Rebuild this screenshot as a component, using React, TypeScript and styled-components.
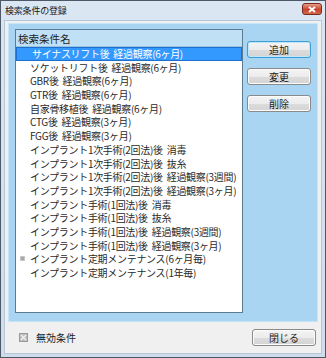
import React from 'react';
import styled, { createGlobalStyle } from 'styled-components';

const GlobalStyle = createGlobalStyle`
  html, body {
    margin: 0;
    padding: 0;
    background: #ffffff;
  }
  body {
    font-family: "Noto Sans CJK JP", "DejaVu Sans", sans-serif;
    font-size: 10px;
    color: #1e1e1e;
  }
`;

const Window = styled.div`
  width: 326px;
  height: 358px;
  box-sizing: border-box;
  border: 1px solid #4d5966;
  background: linear-gradient(#dbe6f3, #cfdcec);
  display: flex;
  flex-direction: column;
  padding: 0 3px 3px 3px;
`;

const TitleBar = styled.div`
  height: 19px;
  display: flex;
  align-items: center;
  justify-content: space-between;
  padding-left: 1px;
  font-size: 9px;
  letter-spacing: -0.2px;
  color: #1a1a1a;
`;

const CloseBox = styled.div`
  width: 20px;
  height: 12px;
  margin-top: -3px;
  border: 1px solid #7a2a1e;
  border-radius: 3px;
  background: linear-gradient(#e99b86, #c7462b 55%, #d2664a);
  display: flex;
  align-items: center;
  justify-content: center;
  box-sizing: border-box;
`;

const Client = styled.div`
  flex: 1;
  background: #f0f0f0;
  border: 1px solid #b7c6d8;
  display: flex;
  flex-direction: column;
  padding: 2px 3px 0 3px;
`;

const Panel = styled.div`
  height: 299px;
  box-sizing: border-box;
  background: #aad5f2;
  border: 1px solid #c7e4f8;
  padding: 5px 5px 8px 6px;
  display: flex;
  gap: 4px;
`;

const ListBox = styled.div`
  width: 228px;
  box-sizing: border-box;
  border: 1px solid #5d7b93;
  background: #ffffff;
  display: flex;
  flex-direction: column;
`;

const ListHeader = styled.div`
  height: 17px;
  box-sizing: border-box;
  background: #c0e0f6;
  border-bottom: 1px solid #98c4e2;
  padding-left: 2px;
  display: flex;
  align-items: center;
  font-size: 10.5px;
  color: #222;
`;

const Row = styled.div<{ $selected?: boolean }>`
  height: 13.7px;
  line-height: 13.7px;
  padding-left: ${p => (p.$selected ? '16px' : '14px')};
  padding-right: 1px;
  position: relative;
  white-space: nowrap;
  overflow: hidden;
  text-overflow: ellipsis;
  font-size: 10px;
  letter-spacing: -0.3px;
  word-spacing: 2px;
  background: ${p => (p.$selected ? '#3399ff' : 'transparent')};
  color: ${p => (p.$selected ? '#ffffff' : '#2a2a2a')};
  outline: ${p => (p.$selected ? '1px solid #1f6fcf' : 'none')};
  outline-offset: -1px;
`;

const Bullet = styled.span`
  position: absolute;
  left: 4px;
  top: 4px;
  width: 5px;
  height: 5px;
  background: #a8a8a8;
  border: 1px solid #c8c8c8;
  box-sizing: border-box;
`;

const ButtonColumn = styled.div`
  display: flex;
  flex-direction: column;
  gap: 10px;
  padding-top: 12px;
`;

const Button = styled.button<{ $focused?: boolean }>`
  width: 64px;
  height: 17px;
  padding: 0;
  box-sizing: border-box;
  border: 1px solid ${p => (p.$focused ? '#3c9fd6' : '#8a8a8a')};
  border-radius: 3px;
  background: linear-gradient(#f4f4f4 0%, #ececec 50%, #dcdcdc 51%, #d4d4d4 100%);
  box-shadow: inset 0 0 0 1px ${p => (p.$focused ? '#bfe6fa' : '#fcfcfc')};
  font-family: "Noto Sans CJK JP", sans-serif;
  font-size: 10px;
  color: #1e1e1e;
  line-height: 1;
`;

const Footer = styled.div`
  flex: 1;
  display: flex;
  align-items: center;
  justify-content: space-between;
  padding: 0 2px 0 11px;
`;

const Legend = styled.div`
  display: flex;
  align-items: center;
  gap: 8px;
  font-size: 10px;
  color: #222;
`;

const LegendBox = styled.span`
  width: 9px;
  height: 9px;
  box-sizing: border-box;
  border: 1px solid #9a9a9a;
  background: #bdbdbd;
  display: flex;
  align-items: center;
  justify-content: center;
`;

const items = [
  'サイナスリフト後 経過観察(6ヶ月)',
  'ソケットリフト後 経過観察(6ヶ月)',
  'GBR後 経過観察(6ヶ月)',
  'GTR後 経過観察(6ヶ月)',
  '自家骨移植後 経過観察(6ヶ月)',
  'CTG後 経過観察(3ヶ月)',
  'FGG後 経過観察(3ヶ月)',
  'インプラント1次手術(2回法)後 消毒',
  'インプラント1次手術(2回法)後 抜糸',
  'インプラント1次手術(2回法)後 経過観察(3週間)',
  'インプラント1次手術(2回法)後 経過観察(3ヶ月)',
  'インプラント手術(1回法)後 消毒',
  'インプラント手術(1回法)後 抜糸',
  'インプラント手術(1回法)後 経過観察(3週間)',
  'インプラント手術(1回法)後 経過観察(3ヶ月)',
  'インプラント定期メンテナンス(6ヶ月毎)',
  'インプラント定期メンテナンス(1年毎)',
];

const App = () => {
  return (
    <>
      <GlobalStyle />
      <Window>
        <TitleBar>
          <span>検索条件の登録</span>
          <CloseBox>
            <svg width="8" height="7" viewBox="0 0 8 7">
              <path d="M1 1 L7 6 M7 1 L1 6" stroke="#fff" strokeWidth="1.8" />
            </svg>
          </CloseBox>
        </TitleBar>
        <Client>
          <Panel>
            <ListBox>
              <ListHeader>検索条件名</ListHeader>
              {items.map((text, i) => (
                <Row key={i} $selected={i === 0}>
                  {i === 15 && <Bullet />}
                  {text}
                </Row>
              ))}
            </ListBox>
            <ButtonColumn>
              <Button $focused>追加</Button>
              <Button>変更</Button>
              <Button>削除</Button>
            </ButtonColumn>
          </Panel>
          <Footer>
            <Legend>
              <LegendBox>
                <svg width="7" height="7" viewBox="0 0 7 7">
                  <path d="M1 1 L6 6 M6 1 L1 6" stroke="#f2f2f2" strokeWidth="1.2" />
                </svg>
              </LegendBox>
              無効条件
            </Legend>
            <Button>閉じる</Button>
          </Footer>
        </Client>
      </Window>
    </>
  );
};

export default App;
